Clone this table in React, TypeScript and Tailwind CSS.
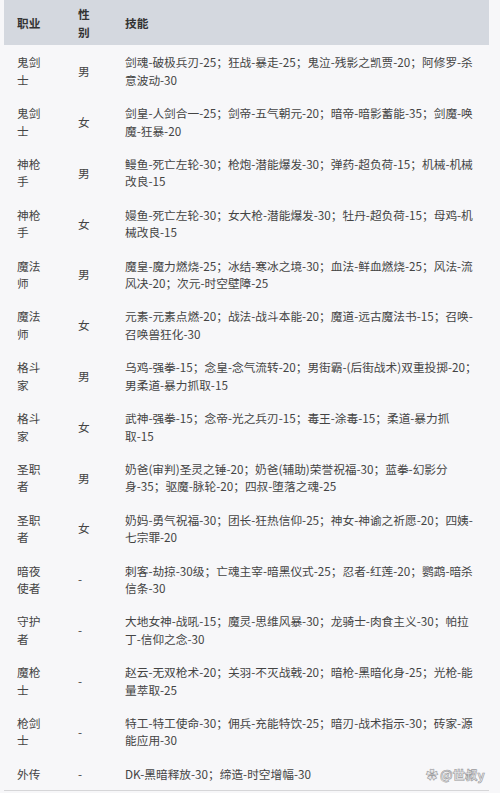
import React from "react";

const rows: [string[], string, string[]][] = [
  [["鬼剑", "士"], "男", ["剑魂-破极兵刃-25；狂战-暴走-25；鬼泣-残影之凯贾-20；阿修罗-杀", "意波动-30"]],
  [["鬼剑", "士"], "女", ["剑皇-人剑合一-25；剑帝-五气朝元-20；暗帝-暗影蓄能-35；剑魔-唤", "魔-狂暴-20"]],
  [["神枪", "手"], "男", ["鳗鱼-死亡左轮-30；枪炮-潜能爆发-30；弹药-超负荷-15；机械-机械", "改良-15"]],
  [["神枪", "手"], "女", ["嫚鱼-死亡左轮-30；女大枪-潜能爆发-30；牡丹-超负荷-15；母鸡-机", "械改良-15"]],
  [["魔法", "师"], "男", ["魔皇-魔力燃烧-25；冰结-寒冰之境-30；血法-鲜血燃烧-25；风法-流", "风决-20；次元-时空壁障-25"]],
  [["魔法", "师"], "女", ["元素-元素点燃-20；战法-战斗本能-20；魔道-远古魔法书-15；召唤-", "召唤兽狂化-30"]],
  [["格斗", "家"], "男", ["乌鸡-强拳-15；念皇-念气流转-20；男街霸-(后街战术)双重投掷-20；", "男柔道-暴力抓取-15"]],
  [["格斗", "家"], "女", ["武神-强拳-15；念帝-光之兵刃-15；毒王-涂毒-15；柔道-暴力抓", "取-15"]],
  [["圣职", "者"], "男", ["奶爸(审判)圣灵之锤-20；奶爸(辅助)荣誉祝福-30；蓝拳-幻影分", "身-35；驱魔-脉轮-20；四叔-堕落之魂-25"]],
  [["圣职", "者"], "女", ["奶妈-勇气祝福-30；团长-狂热信仰-25；神女-神谕之祈愿-20；四姨-", "七宗罪-20"]],
  [["暗夜", "使者"], "-", ["刺客-劫掠-30级；亡魂主宰-暗黑仪式-25；忍者-红莲-20；鹦鹉-暗杀", "信条-30"]],
  [["守护", "者"], "-", ["大地女神-战吼-15；魔灵-思维风暴-30；龙骑士-肉食主义-30；帕拉", "丁-信仰之念-30"]],
  [["魔枪", "士"], "-", ["赵云-无双枪术-20；关羽-不灭战戟-20；暗枪-黑暗化身-25；光枪-能", "量萃取-25"]],
  [["枪剑", "士"], "-", ["特工-特工使命-30；佣兵-充能特饮-25；暗刃-战术指示-30；砖家-源", "能应用-30"]],
  [["外传"], "-", ["DK-黑暗释放-30；缔造-时空增幅-30"]],
];

export default function App() {
  return (
    <div
      className="relative w-[500px] h-[793px] bg-[#f7f7f9] overflow-hidden"
      style={{ fontFamily: '"Noto Sans CJK SC", "Noto Sans", sans-serif' }}
    >
      <table className="ml-[4px] w-[485px] border-collapse table-fixed text-[11.7px] leading-[17.4px] text-[#444]">
        <colgroup>
          <col className="w-[61px]" />
          <col className="w-[47px]" />
          <col />
        </colgroup>
        <thead>
          <tr className="bg-[#d4d8df]">
            <th className="pl-[13px] pr-[8px] py-[5.3px] text-left font-semibold text-[#333]">职业</th>
            <th className="pl-[13px] pr-[8px] py-[5.3px] text-left font-semibold text-[#333]">
              <span className="block">性</span>
              <span className="block">别</span>
            </th>
            <th className="pl-[13px] pr-[8px] py-[5.3px] text-left font-semibold text-[#333]">技能</th>
          </tr>
        </thead>
        <tbody className="border-b border-[#d6d6d8]">
          {rows.map(([job, sex, skill], i) => (
            <tr key={i}>
              <td className="pl-[13px] pr-[8px] py-[8px] align-middle">
                {job.map((l, j) => (
                  <span key={j} className="block whitespace-nowrap">{l}</span>
                ))}
              </td>
              <td className="pl-[13px] pr-[8px] py-[8px] align-middle">{sex}</td>
              <td className="pl-[13px] pr-[4px] py-[8px] align-middle">
                {skill.map((l, j) => (
                  <span key={j} className="block whitespace-nowrap">{l}</span>
                ))}
              </td>
            </tr>
          ))}
        </tbody>
      </table>
      <div className="absolute left-[426px] top-[766px] flex items-center gap-[2px] text-[12.5px] font-bold text-[#e8e8ea] [-webkit-text-stroke:0.6px_#9a9a9c]">
        <span className="text-[12px]">✿</span>
        <span>@世叔y</span>
      </div>
    </div>
  );
}
